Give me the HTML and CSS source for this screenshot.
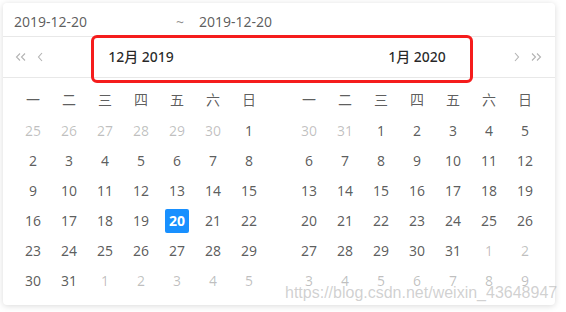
FILE: index.html
```html
<!DOCTYPE html>
<html lang="zh">
<head>
<meta charset="utf-8">
<title>Range picker</title>
<link rel="stylesheet" href="styles.css">
</head>
<body>
<div class="picker">
  <div class="inputs">
    <span class="date first">2019-12-20</span>
    <span class="tilde">~</span>
    <span class="date">2019-12-20</span>
  </div>
  <div class="panels">
    <div class="half">
      <div class="header">
        <div class="nav left">
          <svg class="ico dbl" width="11" height="8" viewBox="0 0 11 8"><polyline points="5,0.5 1.5,4 5,7.5"/><polyline points="10,0.5 6.5,4 10,7.5"/></svg>
          <svg class="ico sgl" width="6" height="10" viewBox="0 0 6 10"><polyline points="5,1 1.5,5 5,9"/></svg>
        </div>
        <div class="title">12月 2019</div>
        <div></div>
      </div>
      <div class="body">
        <div class="grid">
          <span class="wd">一</span><span class="wd">二</span><span class="wd">三</span><span class="wd">四</span><span class="wd">五</span><span class="wd">六</span><span class="wd">日</span>
        </div>
        <div class="grid dates">
          <span class="d off">25</span><span class="d off">26</span><span class="d off">27</span><span class="d off">28</span><span class="d off">29</span><span class="d off">30</span><span class="d">1</span>
          <span class="d">2</span><span class="d">3</span><span class="d">4</span><span class="d">5</span><span class="d">6</span><span class="d">7</span><span class="d">8</span>
          <span class="d">9</span><span class="d">10</span><span class="d">11</span><span class="d">12</span><span class="d">13</span><span class="d">14</span><span class="d">15</span>
          <span class="d">16</span><span class="d">17</span><span class="d">18</span><span class="d">19</span><span class="d"><b class="sel">20</b></span><span class="d">21</span><span class="d">22</span>
          <span class="d">23</span><span class="d">24</span><span class="d">25</span><span class="d">26</span><span class="d">27</span><span class="d">28</span><span class="d">29</span>
          <span class="d">30</span><span class="d">31</span><span class="d off">1</span><span class="d off">2</span><span class="d off">3</span><span class="d off">4</span><span class="d off">5</span>
        </div>
      </div>
    </div>
    <div class="half">
      <div class="header">
        <div></div>
        <div class="title">1月 2020</div>
        <div class="nav right">
          <svg class="ico sgl" width="6" height="10" viewBox="0 0 6 10"><polyline points="1,1 4.5,5 1,9"/></svg>
          <svg class="ico dbl" width="11" height="8" viewBox="0 0 11 8"><polyline points="1,0.5 4.5,4 1,7.5"/><polyline points="6,0.5 9.5,4 6,7.5"/></svg>
        </div>
      </div>
      <div class="body">
        <div class="grid">
          <span class="wd">一</span><span class="wd">二</span><span class="wd">三</span><span class="wd">四</span><span class="wd">五</span><span class="wd">六</span><span class="wd">日</span>
        </div>
        <div class="grid dates">
          <span class="d off">30</span><span class="d off">31</span><span class="d">1</span><span class="d">2</span><span class="d">3</span><span class="d">4</span><span class="d">5</span>
          <span class="d">6</span><span class="d">7</span><span class="d">8</span><span class="d">9</span><span class="d">10</span><span class="d">11</span><span class="d">12</span>
          <span class="d">13</span><span class="d">14</span><span class="d">15</span><span class="d">16</span><span class="d">17</span><span class="d">18</span><span class="d">19</span>
          <span class="d">20</span><span class="d">21</span><span class="d">22</span><span class="d">23</span><span class="d">24</span><span class="d">25</span><span class="d">26</span>
          <span class="d">27</span><span class="d">28</span><span class="d">29</span><span class="d">30</span><span class="d">31</span><span class="d off">1</span><span class="d off">2</span>
          <span class="d off">3</span><span class="d off">4</span><span class="d off">5</span><span class="d off">6</span><span class="d off">7</span><span class="d off">8</span><span class="d off">9</span>
        </div>
      </div>
    </div>
  </div>
  <div class="annot"></div>
</div>
<div class="watermark">https://blog.csdn.net/weixin_43648947</div>
</body>
</html>
```
FILE: styles.css
```css
html, body {
  margin: 0;
  padding: 0;
  background: #fff;
}
body {
  position: relative;
  width: 566px;
  height: 312px;
  overflow: hidden;
  font-family: "Noto Sans", "Noto Sans CJK SC", sans-serif;
  font-size: 14px;
  color: rgba(0, 0, 0, 0.65);
}
.picker {
  position: relative;
  margin: 3px;
  width: 552px;
  height: 302px;
  box-sizing: border-box;
  border-radius: 4px;
  background: #fff;
  box-shadow: 0 1px 6px rgba(0, 0, 0, 0.15);
}
.inputs {
  display: flex;
  align-items: center;
  height: 34px;
  box-sizing: border-box;
  padding: 4px 0 0 11px;
  border-bottom: 1px solid #e8e8e8;
  line-height: 22px;
}
.date.first {
  width: 162px;
}
.tilde {
  width: 23px;
  color: rgba(0, 0, 0, 0.45);
}
.panels {
  display: flex;
}
.half {
  width: 276px;
}
.header {
  display: grid;
  grid-template-columns: 1fr auto 1fr;
  align-items: center;
  height: 40px;
  border-bottom: 1px solid #e8e8e8;
}
.title {
  font-weight: 500;
  color: rgba(0, 0, 0, 0.85);
  line-height: 22px;
}
.nav {
  display: flex;
  align-items: center;
  gap: 11px;
}
.nav.left {
  justify-self: start;
  padding-left: 12px;
}
.nav.right {
  justify-self: end;
  padding-right: 13px;
}
.ico {
  fill: none;
  stroke: rgba(0, 0, 0, 0.3);
  stroke-width: 1.1;
}
.body {
  padding: 7px 12px 8px;
}
.grid {
  display: grid;
  grid-template-columns: repeat(7, 36px);
  grid-auto-rows: 30px;
}
.dates {
  margin-top: 1px;
}
.wd, .d {
  display: flex;
  align-items: center;
  justify-content: center;
  line-height: 20px;
}
.wd {
  color: rgba(0, 0, 0, 0.65);
}
.off {
  color: rgba(0, 0, 0, 0.25);
}
.sel {
  display: block;
  width: 24px;
  height: 24px;
  line-height: 24px;
  text-align: center;
  border-radius: 2px;
  background: #1890ff;
  color: #fff;
  font-weight: 700;
}
.annot {
  position: absolute;
  left: 88px;
  top: 32px;
  width: 382px;
  height: 48px;
  box-sizing: border-box;
  border: 3px solid #f51c1c;
  border-radius: 6px;
}
.watermark {
  position: absolute;
  left: 285px;
  top: 284px;
  font-family: "Liberation Sans", Arial, sans-serif;
  font-size: 16px;
  line-height: 18px;
  color: rgba(170, 170, 170, 0.55);
  white-space: nowrap;
}
```
